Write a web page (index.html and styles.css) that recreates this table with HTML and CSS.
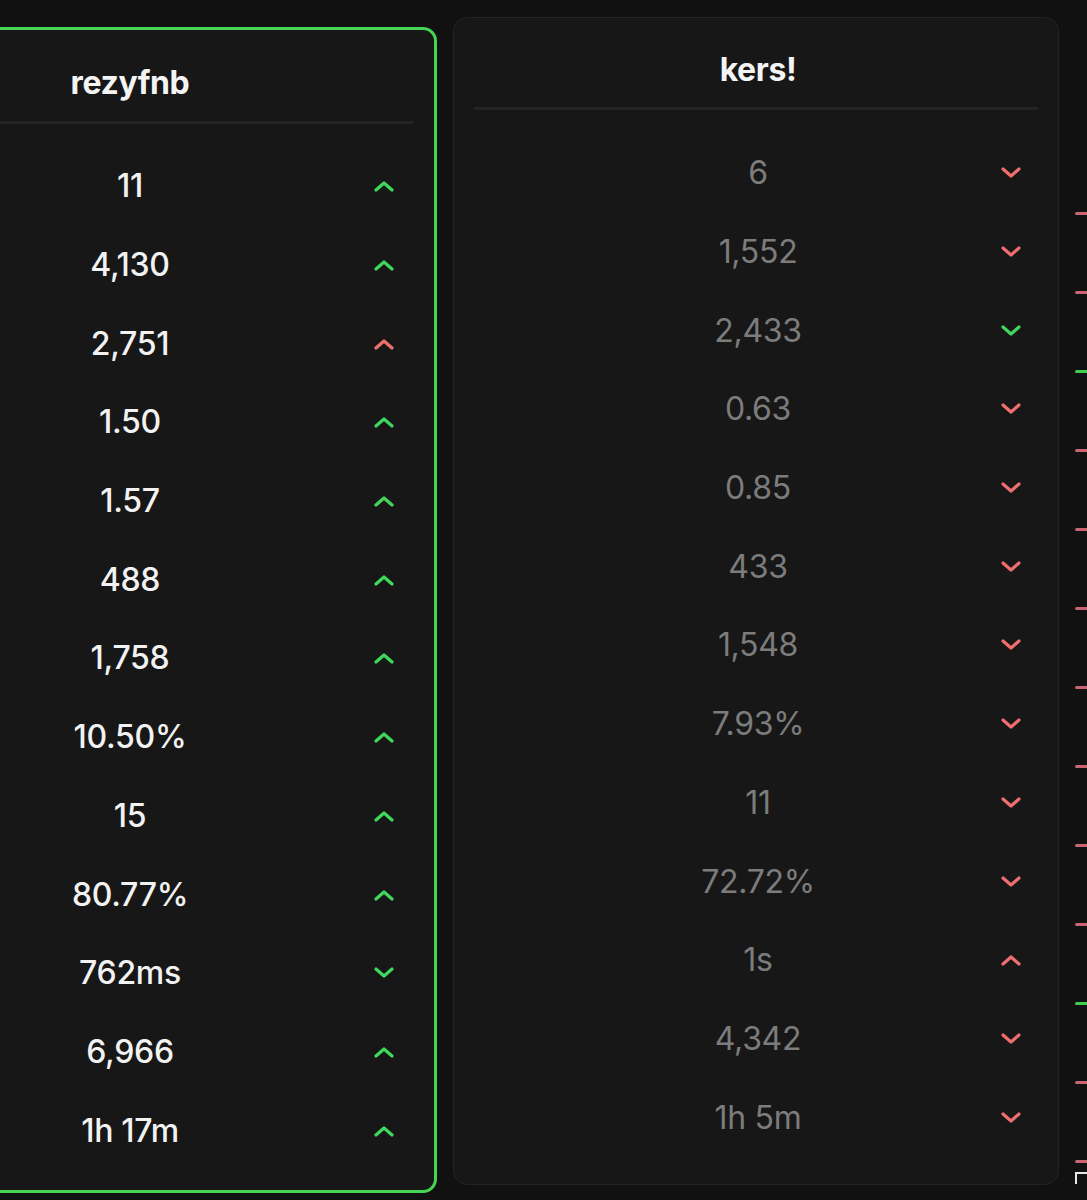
FILE: index.html
```html
<!DOCTYPE html>
<html>
<head>
<meta charset="utf-8">
<link rel="stylesheet" href="styles.css">
</head>
<body>
<div class="board">
  <section class="card card--active">
    <header class="card-head">rezyfnb</header>
    <div class="divider"></div>
    <ul class="rows">
      <li class="row"><span class="val">11</span><svg class="chev up good" viewBox="0 0 20 12"><polyline points="2,10 10,3 18,10"/></svg></li>
      <li class="row"><span class="val">4,130</span><svg class="chev up good" viewBox="0 0 20 12"><polyline points="2,10 10,3 18,10"/></svg></li>
      <li class="row"><span class="val">2,751</span><svg class="chev up bad" viewBox="0 0 20 12"><polyline points="2,10 10,3 18,10"/></svg></li>
      <li class="row"><span class="val">1.50</span><svg class="chev up good" viewBox="0 0 20 12"><polyline points="2,10 10,3 18,10"/></svg></li>
      <li class="row"><span class="val">1.57</span><svg class="chev up good" viewBox="0 0 20 12"><polyline points="2,10 10,3 18,10"/></svg></li>
      <li class="row"><span class="val">488</span><svg class="chev up good" viewBox="0 0 20 12"><polyline points="2,10 10,3 18,10"/></svg></li>
      <li class="row"><span class="val">1,758</span><svg class="chev up good" viewBox="0 0 20 12"><polyline points="2,10 10,3 18,10"/></svg></li>
      <li class="row"><span class="val">10.50%</span><svg class="chev up good" viewBox="0 0 20 12"><polyline points="2,10 10,3 18,10"/></svg></li>
      <li class="row"><span class="val">15</span><svg class="chev up good" viewBox="0 0 20 12"><polyline points="2,10 10,3 18,10"/></svg></li>
      <li class="row"><span class="val">80.77%</span><svg class="chev up good" viewBox="0 0 20 12"><polyline points="2,10 10,3 18,10"/></svg></li>
      <li class="row"><span class="val">762ms</span><svg class="chev down good" viewBox="0 0 20 12"><polyline points="2,2 10,9 18,2"/></svg></li>
      <li class="row"><span class="val">6,966</span><svg class="chev up good" viewBox="0 0 20 12"><polyline points="2,10 10,3 18,10"/></svg></li>
      <li class="row"><span class="val">1h 17m</span><svg class="chev up good" viewBox="0 0 20 12"><polyline points="2,10 10,3 18,10"/></svg></li>
    </ul>
  </section>

  <section class="card card--other">
    <header class="card-head">kers!</header>
    <div class="divider"></div>
    <ul class="rows">
      <li class="row"><span class="val">6</span><svg class="chev down bad" viewBox="0 0 20 12"><polyline points="2,2 10,9 18,2"/></svg></li>
      <li class="row"><span class="val">1,552</span><svg class="chev down bad" viewBox="0 0 20 12"><polyline points="2,2 10,9 18,2"/></svg></li>
      <li class="row"><span class="val">2,433</span><svg class="chev down good" viewBox="0 0 20 12"><polyline points="2,2 10,9 18,2"/></svg></li>
      <li class="row"><span class="val">0.63</span><svg class="chev down bad" viewBox="0 0 20 12"><polyline points="2,2 10,9 18,2"/></svg></li>
      <li class="row"><span class="val">0.85</span><svg class="chev down bad" viewBox="0 0 20 12"><polyline points="2,2 10,9 18,2"/></svg></li>
      <li class="row"><span class="val">433</span><svg class="chev down bad" viewBox="0 0 20 12"><polyline points="2,2 10,9 18,2"/></svg></li>
      <li class="row"><span class="val">1,548</span><svg class="chev down bad" viewBox="0 0 20 12"><polyline points="2,2 10,9 18,2"/></svg></li>
      <li class="row"><span class="val">7.93%</span><svg class="chev down bad" viewBox="0 0 20 12"><polyline points="2,2 10,9 18,2"/></svg></li>
      <li class="row"><span class="val">11</span><svg class="chev down bad" viewBox="0 0 20 12"><polyline points="2,2 10,9 18,2"/></svg></li>
      <li class="row"><span class="val">72.72%</span><svg class="chev down bad" viewBox="0 0 20 12"><polyline points="2,2 10,9 18,2"/></svg></li>
      <li class="row"><span class="val">1s</span><svg class="chev up bad" viewBox="0 0 20 12"><polyline points="2,10 10,3 18,10"/></svg></li>
      <li class="row"><span class="val">4,342</span><svg class="chev down bad" viewBox="0 0 20 12"><polyline points="2,2 10,9 18,2"/></svg></li>
      <li class="row"><span class="val">1h 5m</span><svg class="chev down bad" viewBox="0 0 20 12"><polyline points="2,2 10,9 18,2"/></svg></li>
    </ul>
  </section>

  <section class="strip">
    <span class="dash bad"></span>
    <span class="dash bad"></span>
    <span class="dash good"></span>
    <span class="dash bad"></span>
    <span class="dash bad"></span>
    <span class="dash bad"></span>
    <span class="dash bad"></span>
    <span class="dash bad"></span>
    <span class="dash bad"></span>
    <span class="dash bad"></span>
    <span class="dash good"></span>
    <span class="dash bad"></span>
    <span class="dash bad"></span>
    <span class="corner"></span>
  </section>
</div>
</body>
</html>
```

FILE: styles.css
```css
* { box-sizing: border-box; }

html, body {
  margin: 0;
  padding: 0;
  background: #111111;
  overflow: hidden;
  height: 1200px;
}

body {
  font-family: Inter, "Noto Sans", sans-serif;
  color: #f2f2f2;
}

.board {
  display: flex;
  align-items: flex-start;
  gap: 16px;
  margin-left: -177px;
}

.card {
  flex: none;
  background: #171717;
  border-radius: 14px;
  display: flex;
  flex-direction: column;
}

.card--active {
  width: 614px;
  height: 1166px;
  margin-top: 27px;
  border: 3px solid #46d452;
  padding-top: 34px;
}

.card--other {
  width: 606px;
  height: 1168px;
  margin-top: 17px;
  border: 1px solid #232323;
  padding-top: 33px;
}

.card-head {
  text-align: center;
  font-weight: 700;
  font-size: 32px;
  line-height: 38px;
  letter-spacing: -0.4px;
  color: #f4f4f4;
}

.card--other .card-head {
  padding-left: 4px;
}

.divider {
  height: 3px;
  background: #242424;
  margin: 19px 20px 0;
  border-radius: 2px;
}

.card--other .divider {
  margin-top: 18px;
}

.rows {
  list-style: none;
  margin: 0;
  padding: 23px 0 0;
}

.card--other .rows {
  padding-top: 24px;
}

.row {
  height: 78.7px;
  display: grid;
  grid-template-columns: 1fr auto 1fr;
  align-items: center;
}

.card--other .row {
  padding-left: 4px;
}

.val {
  grid-column: 2;
  font-size: 32px;
  line-height: 38px;
  letter-spacing: -0.3px;
  font-weight: 500;
  color: #f2f2f2;
}

.card--other .val {
  font-weight: 400;
  color: #7c7c7c;
}

.chev {
  grid-column: 3;
  justify-self: end;
  width: 20px;
  height: 12px;
  margin-right: 40px;
  fill: none;
  stroke-width: 3.2;
  stroke-linecap: round;
  stroke-linejoin: round;
}

.card--other .chev {
  margin-right: 37px;
}

.chev.good { stroke: #40d85c; }
.chev.bad { stroke: #ef6f6f; }

.strip {
  flex: none;
  width: 40px;
  margin-top: 212px;
  display: flex;
  flex-direction: column;
  gap: 76px;
}

.dash {
  display: block;
  width: 14px;
  height: 3px;
  border-radius: 2px;
}

.dash.bad { background: #c96472; }
.dash.good { background: #3fce4c; }

.corner {
  display: block;
  width: 12px;
  height: 12px;
  border-top: 2px solid #e8e8e8;
  border-left: 2px solid #e8e8e8;
  margin-top: -67px;
}
```
